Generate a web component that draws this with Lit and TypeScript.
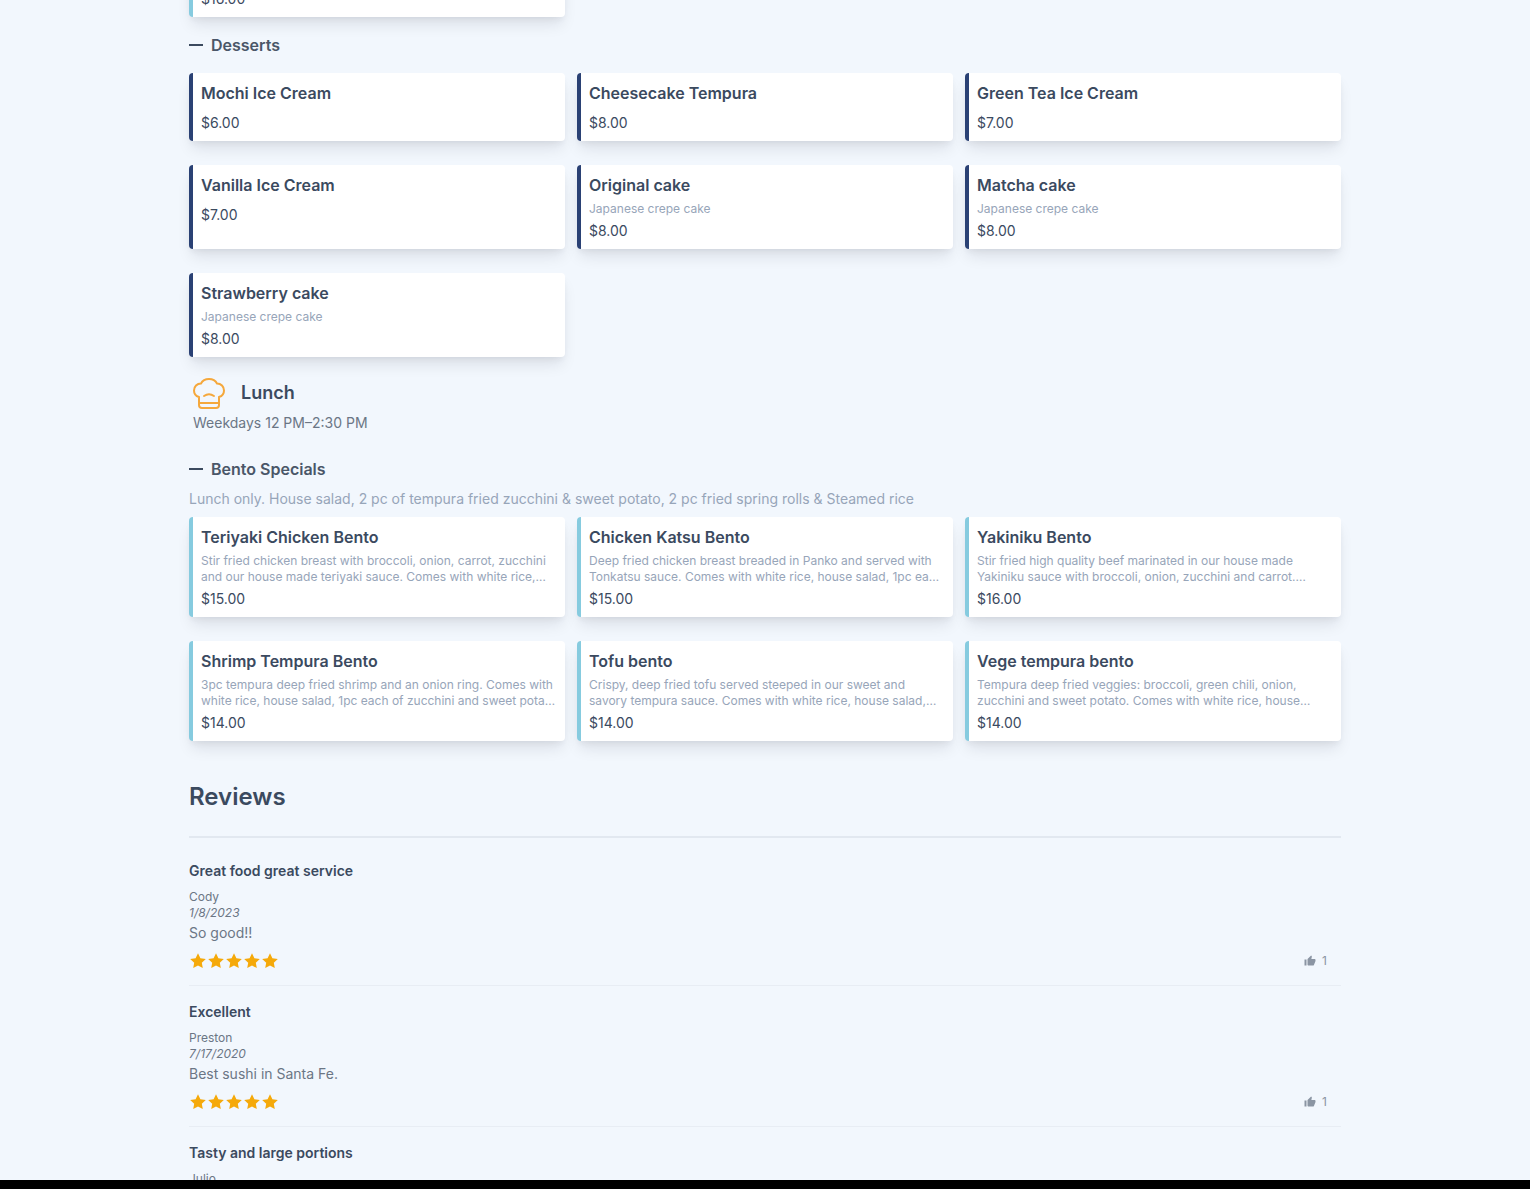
import { LitElement, html, css, svg } from "lit";
import { customElement } from "lit/decorators.js";

type Item = { name: string; desc?: string; price: string };

const desserts: Item[] = [
  { name: "Mochi Ice Cream", price: "$6.00" },
  { name: "Cheesecake Tempura", price: "$8.00" },
  { name: "Green Tea Ice Cream", price: "$7.00" },
  { name: "Vanilla Ice Cream", price: "$7.00" },
  { name: "Original cake", desc: "Japanese crepe cake", price: "$8.00" },
  { name: "Matcha cake", desc: "Japanese crepe cake", price: "$8.00" },
  { name: "Strawberry cake", desc: "Japanese crepe cake", price: "$8.00" },
];

const bento: Item[] = [
  { name: "Teriyaki Chicken Bento", desc: "Stir fried chicken breast with broccoli, onion, carrot, zucchini and our house made teriyaki sauce. Comes with white rice, house salad, 1pc each of zucchini and sweet potato tempura.", price: "$15.00" },
  { name: "Chicken Katsu Bento", desc: "Deep fried chicken breast breaded in Panko and served with Tonkatsu sauce. Comes with white rice, house salad, 1pc each of zucchini and sweet potato tempura.", price: "$15.00" },
  { name: "Yakiniku Bento", desc: "Stir fried high quality beef marinated in our house made Yakiniku sauce with broccoli, onion, zucchini and carrot. Comes with white rice, house salad and tempura.", price: "$16.00" },
  { name: "Shrimp Tempura Bento", desc: "3pc tempura deep fried shrimp and an onion ring. Comes with white rice, house salad, 1pc each of zucchini and sweet potato tempura.", price: "$14.00" },
  { name: "Tofu bento", desc: "Crispy, deep fried tofu served steeped in our sweet and savory tempura sauce. Comes with white rice, house salad, 1pc each of zucchini and sweet potato.", price: "$14.00" },
  { name: "Vege tempura bento", desc: "Tempura deep fried veggies: broccoli, green chili, onion, zucchini and sweet potato. Comes with white rice, house salad and spring rolls.", price: "$14.00" },
];

const reviews = [
  { title: "Great food great service", author: "Cody", date: "1/8/2023", text: "So good!!" },
  { title: "Excellent", author: "Preston", date: "7/17/2020", text: "Best sushi in Santa Fe." },
  { title: "Tasty and large portions", author: "Julio", date: "", text: "" },
];

const star = svg`<path d="M9 1.2l2.4 5 5.4.7-4 3.8 1 5.4L9 13.5l-4.800 2.600 1-5.400-4-3.800 5.400-.7z" />`;

@customElement("app-root")
export class AppRoot extends LitElement {
  static styles = css`
    :host {
      display: block;
      height: 1189px;
      overflow: hidden;
      background: #000;
      font-family: Inter, "Liberation Sans", sans-serif;
      color: #3b4a5f;
    }
    .page {
      height: 1180px;
      overflow: hidden;
      background: #f2f7fd;
      padding: 0 189px;
      box-sizing: border-box;
    }
    .grid {
      display: grid;
      grid-template-columns: repeat(3, 376px);
      column-gap: 12px;
      row-gap: 24px;
    }
    .scrolled {
      margin-top: -83px;
    }
    .card {
      background: #fff;
      border-left: 4px solid #2a4174;
      border-radius: 4px;
      box-shadow: 0 10px 15px -3px rgba(15, 23, 42, 0.1), 0 4px 6px -2px rgba(15, 23, 42, 0.06);
      padding: 8px;
      box-sizing: border-box;
      display: flex;
      flex-direction: column;
      min-width: 0;
    }
    .card.light {
      border-left-color: #86cbdf;
    }
    .name {
      font-size: 16px;
      font-weight: 600;
      line-height: 24px;
      margin-bottom: 4px;
      color: #3b4a5f;
    }
    .desc {
      font-size: 12px;
      line-height: 16px;
      color: #97a5b9;
      display: -webkit-box;
      -webkit-box-orient: vertical;
      -webkit-line-clamp: 2;
      overflow: hidden;
    }
    .price {
      font-size: 14px;
      line-height: 20px;
      color: #3b4a5f;
      margin-top: 4px;
    }
    .sub {
      display: flex;
      align-items: center;
      gap: 8px;
      height: 24px;
      font-size: 16px;
      font-weight: 600;
      color: #4a5668;
    }
    .dash {
      width: 14px;
      height: 2px;
      background: #3b4a5f;
    }
    .desserts {
      margin-top: 16px;
      margin-bottom: 16px;
    }
    .menu-head {
      display: flex;
      align-items: center;
      gap: 16px;
      margin: 20px 0 0 4px;
      height: 32px;
    }
    .menu-title {
      font-size: 18px;
      line-height: 28px;
      padding-bottom: 1px;
      font-weight: 600;
      color: #3b4a5f;
    }
    .hours {
      font-size: 14px;
      line-height: 20px;
      color: #6b7685;
      margin: 4px 0 0 4px;
    }
    .bento-head {
      margin-top: 24px;
    }
    .note {
      font-size: 14px;
      line-height: 20px;
      color: #97a5b9;
      margin: 8px 0 8px;
    }
    .reviews-title {
      font-size: 24px;
      line-height: 32px;
      font-weight: 600;
      color: #3b4a5f;
      margin-top: 40px;
      padding-bottom: 23px;
      border-bottom: 2px solid #e2e8f0;
    }
    .reviews {
      padding-top: 7px;
    }
    .review {
      padding-top: 16px;
      height: 141px;
      box-sizing: border-box;
      border-bottom: 1px solid #e8edf4;
    }
    .review:last-child {
      border-bottom: none;
    }
    .r-title {
      font-size: 14px;
      line-height: 20px;
      font-weight: 600;
      color: #3b4a5f;
    }
    .r-author {
      font-size: 12px;
      line-height: 16px;
      color: #6b7685;
      margin-top: 8px;
    }
    .r-date {
      font-size: 12px;
      line-height: 16px;
      font-style: italic;
      color: #6b7685;
    }
    .r-text {
      font-size: 14px;
      line-height: 20px;
      color: #6b7685;
      margin-top: 2px;
    }
    .r-foot {
      display: flex;
      justify-content: space-between;
      align-items: center;
      margin-top: 8px;
      height: 20px;
    }
    .stars {
      display: flex;
      fill: #f5a90a;
    }
    .stars svg {
      width: 18px;
      height: 18px;
      display: block;
    }
    .likes {
      display: flex;
      align-items: center;
      gap: 6px;
      font-size: 12px;
      color: #8b95a3;
      padding-right: 14px;
    }
    .likes span {
      margin-top: -2px;
    }
    .likes svg {
      width: 12px;
      height: 12px;
      fill: #8b95a3;
    }
  `;

  private card(it: Item, light: boolean) {
    return html`<div class="card ${light ? "light" : ""}">
      <div class="name">${it.name}</div>
      ${it.desc ? html`<div class="desc">${it.desc}</div>` : ""}
      <div class="price">${it.price}</div>
    </div>`;
  }

  private review(r: (typeof reviews)[number]) {
    return html`<div class="review">
      <div class="r-title">${r.title}</div>
      <div class="r-author">${r.author}</div>
      ${r.date
        ? html`<div class="r-date">${r.date}</div>
            <div class="r-text">${r.text}</div>
            <div class="r-foot">
              <div class="stars">
                ${[0, 1, 2, 3, 4].map(() => html`<svg viewBox="0 0 18 18">${star}</svg>`)}
              </div>
              <div class="likes">
                <svg viewBox="0 0 24 24"><path d="M1 21h4V9H1v12zM23 10c0-1.100-.9-2-2-2h-6.300l1-4.600v-.3c0-.4-.2-.8-.4-1.100L14.200 1 7.600 7.600C7.200 8 7 8.500 7 9v10c0 1.100.9 2 2 2h9c.8 0 1.500-.5 1.800-1.200l3-7.100c.1-.2.2-.5.2-.7v-2z" /></svg>
                <span>1</span>
              </div>
            </div>`
        : ""}
    </div>`;
  }

  render() {
    return html`<div class="page">
      <div class="grid scrolled">
        ${this.card({ name: "Sashimi Bento", desc: "Chef's selection of fresh fish served with white rice, house salad and our house made sauce with a side of tempura.", price: "$16.00" }, true)}
      </div>
      <div class="sub desserts"><span class="dash"></span>Desserts</div>
      <div class="grid">${desserts.map((d) => this.card(d, false))}</div>
      <div class="menu-head">
        <svg width="32" height="32" viewBox="0 0 32 32" fill="none" stroke="#f5a83c" stroke-width="2" stroke-linecap="round" stroke-linejoin="round">
          <path d="M6 20C2.500 19 1 16.500 1 13.500 1 9.500 4 6.500 8 6.500 9.500 3.500 12.500 2 16 2s6.500 1.500 8 4.500c4 0 7 3 7 7 0 3-1.500 5.500-5 6.500v8q0 3-3 3H9q-3 0-3-3z" />
          <path d="M6 26h20" />
          <path d="M11 19q5-3.500 10 0" />
        </svg>
        <span class="menu-title">Lunch</span>
      </div>
      <div class="hours">Weekdays 12 PM–2:30 PM</div>
      <div class="sub bento-head"><span class="dash"></span>Bento Specials</div>
      <div class="note">Lunch only. House salad, 2 pc of tempura fried zucchini &amp; sweet potato, 2 pc fried spring rolls &amp; Steamed rice</div>
      <div class="grid">${bento.map((d) => this.card(d, true))}</div>
      <div class="reviews-title">Reviews</div>
      <div class="reviews">${reviews.map((r) => this.review(r))}</div>
    </div>`;
  }
}
